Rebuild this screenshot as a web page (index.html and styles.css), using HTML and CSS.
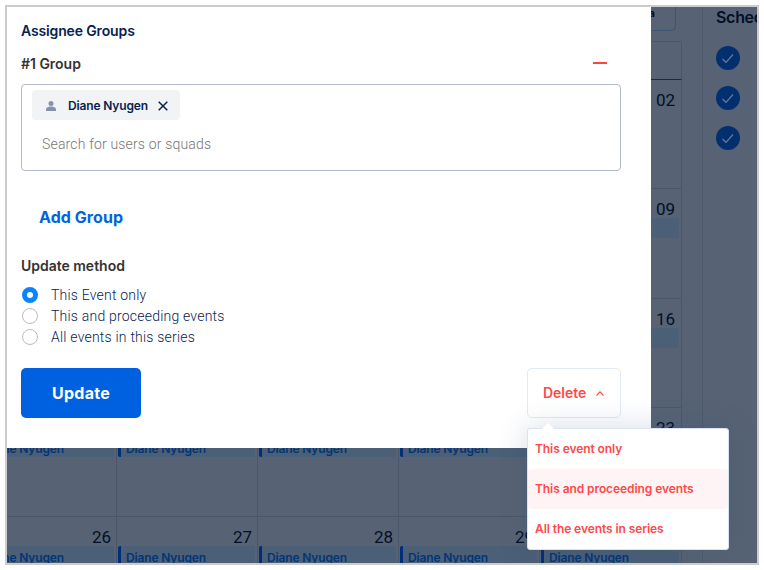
FILE: index.html
```html
<!DOCTYPE html>
<html lang="en">
<head>
<meta charset="utf-8">
<title>Schedule</title>
<link rel="stylesheet" href="styles.css">
</head>
<body>
<div class="frame">
  <div class="page">
    <main class="main">
      <div class="toolbar"><span class="tool-button">a</span></div>
      <div class="calendar">
        <div class="head"></div><div class="head"></div><div class="head"></div><div class="head"></div><div class="head"></div>
        <div class="day"></div><div class="day"></div><div class="day"></div><div class="day"></div><div class="day"><span class="date">02</span></div>
        <div class="day"></div><div class="day"></div><div class="day"></div><div class="day"></div><div class="day"><span class="date">09</span><div class="event"></div></div>
        <div class="day"></div><div class="day"></div><div class="day"></div><div class="day"></div><div class="day"><span class="date">16</span><div class="event"></div></div>
        <div class="day"><div class="date"></div><div class="event">Diane Nyugen</div></div>
        <div class="day"><div class="date"></div><div class="event">Diane Nyugen</div></div>
        <div class="day"><div class="date"></div><div class="event">Diane Nyugen</div></div>
        <div class="day"><div class="date"></div><div class="event">Diane Nyugen</div></div>
        <div class="day"><span class="date">23</span><div class="event"></div></div>
        <div class="day"><span class="date">26</span><div class="event">Diane Nyugen</div></div>
        <div class="day"><span class="date">27</span><div class="event">Diane Nyugen</div></div>
        <div class="day"><span class="date">28</span><div class="event">Diane Nyugen</div></div>
        <div class="day"><span class="date">29</span><div class="event">Diane Nyugen</div></div>
        <div class="day"><div class="date"></div><div class="event">Diane Nyugen</div></div>
      </div>
    </main>
    <aside class="sidebar">
      <h2 class="sidebar-title">Schedules</h2>
      <svg class="check" viewBox="0 0 24 24"><circle cx="12" cy="12" r="12"/><path d="M6.5 13 10 16.3 17 8.5"/></svg>
      <svg class="check" viewBox="0 0 24 24"><circle cx="12" cy="12" r="12"/><path d="M6.5 13 10 16.3 17 8.5"/></svg>
      <svg class="check" viewBox="0 0 24 24"><circle cx="12" cy="12" r="12"/><path d="M6.5 13 10 16.3 17 8.5"/></svg>
    </aside>
  </div>

  <section class="modal">
    <h1 class="title">Assignee Groups</h1>
    <div class="group-head"><h2 class="label">#1 Group</h2><span class="minus"></span></div>
    <div class="picker">
      <div class="chip">
        <svg class="person" viewBox="0 0 10 10"><circle cx="5" cy="2.6" r="2.5"/><path d="M0 10V8.6C0 6.7 2 5.6 5 5.6s5 1.1 5 3V10Z"/></svg>
        <span>Diane Nyugen</span>
        <svg class="close" viewBox="0 0 10 10"><path d="M.7.7l8.6 8.6M9.3.7.7 9.3"/></svg>
      </div>
      <div class="search">Search for users or squads</div>
    </div>
    <div class="add">Add Group</div>
    <h2 class="label method">Update method</h2>
    <div class="options">
      <div class="option"><span class="radio on"></span><span>This Event only</span></div>
      <div class="option"><span class="radio"></span><span>This and proceeding events</span></div>
      <div class="option"><span class="radio"></span><span>All events in this series</span></div>
    </div>
    <div class="actions">
      <div class="update">Update</div>
      <div class="delete"><span>Delete</span><svg class="caret" viewBox="0 0 8 5"><path d="M.5 4.5 4 .9l3.5 3.6"/></svg>
        <div class="menu">
          <div class="item">This event only</div>
          <div class="item active">This and proceeding events</div>
          <div class="item">All the events in series</div>
        </div>
      </div>
    </div>
  </section>
</div>
</body>
</html>
```

FILE: styles.css
```css
* { box-sizing: border-box; }
body {
  margin: 0;
  padding: 5px;
  background: #fff;
  font-family: Inter, "Liberation Sans", sans-serif;
}
h1, h2 { margin: 0; }
svg { display: block; flex: none; }
.frame {
  position: relative;
  width: 754px;
  height: 560px;
  border: 2px solid #ccc;
  overflow: hidden;
}

/* dimmed page */
.page {
  display: flex;
  height: 100%;
  background: #576374;
  color: #020f28;
}
.main {
  flex: none;
  width: 696px;
  padding-right: 21px;
  border-right: 1px solid #4e5b6d;
  overflow: hidden;
}
.toolbar { display: flex; justify-content: flex-end; height: 34px; padding-right: 5px; }
.tool-button {
  display: flex;
  justify-content: flex-end;
  width: 90px;
  height: 24px;
  padding: 0 20px 0 0;
  border: 1px solid #3d5577;
  border-top: 0;
  border-radius: 0 0 5px 5px;
  font-size: 11px;
  font-weight: 700;
  line-height: 12px;
}
.calendar {
  display: grid;
  grid-template-columns: 110px 141px 141px 141px 142px;
  grid-template-rows: 38px 109px 110px 109px 109px 110px;
  border-top: 1px solid #4a576a;
}
.head { border-bottom: 1px solid #02306f; }
.head:nth-child(5) { border-right: 1px solid #4a576a; }
.day {
  border-right: 1px solid #4a576a;
  border-bottom: 1px solid #4a576a;
  overflow: hidden;
}
.date {
  display: block;
  height: 29px;
  padding: 10px 5px 0 0;
  font: 400 17px/20px Roboto, sans-serif;
  text-align: right;
}
.day:nth-child(5n) .date { padding-right: 6px; }
.event {
  height: 20px;
  margin: 0 2px 0 1px;
  padding-left: 5px;
  border-left: 3px solid #002f78;
  border-radius: 2px;
  background: #4b5f76;
  color: #023576;
  font-size: 12px;
  font-weight: 600;
  line-height: 24px;
  letter-spacing: -.15px;
  white-space: nowrap;
  overflow: hidden;
}
.day:nth-child(5n+1) .event { margin-left: -31px; }
.sidebar { padding: 0 0 0 13px; }
.sidebar-title {
  height: 39px;
  font-size: 16px;
  font-weight: 600;
  line-height: 20px;
  letter-spacing: -.3px;
}
.check { width: 24px; height: 24px; margin-bottom: 16px; }
.check circle { fill: #012f70; }
.check path { fill: none; stroke: #687c95; stroke-width: 1.2; }

/* modal */
.modal {
  position: absolute;
  left: 0;
  top: 0;
  width: 644px;
  height: 441px;
  padding: 14px 30px 0 14px;
  background: #fff;
  color: #06234f;
}
.title { font-size: 14px; font-weight: 600; line-height: 20px; letter-spacing: -.14px; }
.label { color: #333; font-size: 14px; font-weight: 600; line-height: 20px; letter-spacing: -.02px; }
.group-head { display: flex; justify-content: space-between; align-items: center; margin-top: 13px; padding-right: 14px; }
.minus { width: 14px; height: 2px; margin-top: -3px; background: #ff4343; }
.picker {
  height: 87px;
  margin-top: 10px;
  padding: 5px 10px;
  border: 1px solid #b1bacb;
  border-radius: 4px;
}
.chip {
  display: flex;
  align-items: center;
  width: 148px;
  height: 30px;
  padding-left: 14px;
  border-radius: 4px;
  background: #f2f3f5;
  font-size: 12px;
  font-weight: 600;
  letter-spacing: -.15px;
}
.chip span { width: 80px; margin: 0 10px 0 12px; white-space: nowrap; }
.person { width: 10px; height: 10px; margin-top: 1px; fill: #8493ab; }
.close { width: 10px; height: 10px; margin-top: 2px; fill: none; stroke: #06234f; stroke-width: 1.5; }
.search { padding: 14px 10px; color: #767676; font: 300 14px/20px Roboto, sans-serif; letter-spacing: .17px; }
.add {
  margin: 35px 0 0 18px;
  color: #0064e1;
  font-size: 16px;
  font-weight: 700;
  line-height: 22px;
  letter-spacing: .06px;
}
.method { margin-top: 28px; }
.options { margin-top: 8px; }
.option {
  display: flex;
  align-items: center;
  gap: 13px;
  height: 21px;
  padding-left: 1px;
  font: 300 14px/20px Roboto, sans-serif;
  letter-spacing: .21px;
}
.radio { width: 16px; height: 16px; border: 1px solid #bdbdbd; border-radius: 50%; }
.radio.on { border: 5px solid #0a84ff; }
.actions { display: flex; justify-content: space-between; margin-top: 21px; }
.update, .delete { display: flex; align-items: center; height: 50px; border-radius: 5px; }
.update {
  justify-content: center;
  width: 120px;
  background: #0061e0;
  color: #fff;
  font-size: 16px;
  font-weight: 700;
  letter-spacing: .3px;
}
.delete {
  position: relative;
  gap: 10px;
  width: 94px;
  padding-left: 15px;
  border: 1px solid #e2eaf5;
  color: #ff4848;
  font-size: 14px;
  font-weight: 600;
}
.delete > span { width: 43px; margin-top: -2px; letter-spacing: -.02px; }
.caret { width: 8px; height: 5px; margin-top: 1px; fill: none; stroke: #ff4848; stroke-width: 1.1; }
.menu {
  position: absolute;
  left: -1px;
  top: 59px;
  width: 202px;
  height: 122px;
  border: 1px solid #dae3ef;
  border-radius: 3px;
  background: #fff;
  box-shadow: 0 0 30px rgba(40, 75, 115, .2);
}
.menu::before {
  content: "";
  position: absolute;
  left: 14px;
  top: -6px;
  border: 6px solid transparent;
  border-top: 0;
  border-bottom-color: #fff;
}
.item { height: 40px; padding-left: 7px; border-radius: 3px; font-size: 12px; line-height: 40px; letter-spacing: -.08px; }
.item.active { background: #fff4f5; }
```
